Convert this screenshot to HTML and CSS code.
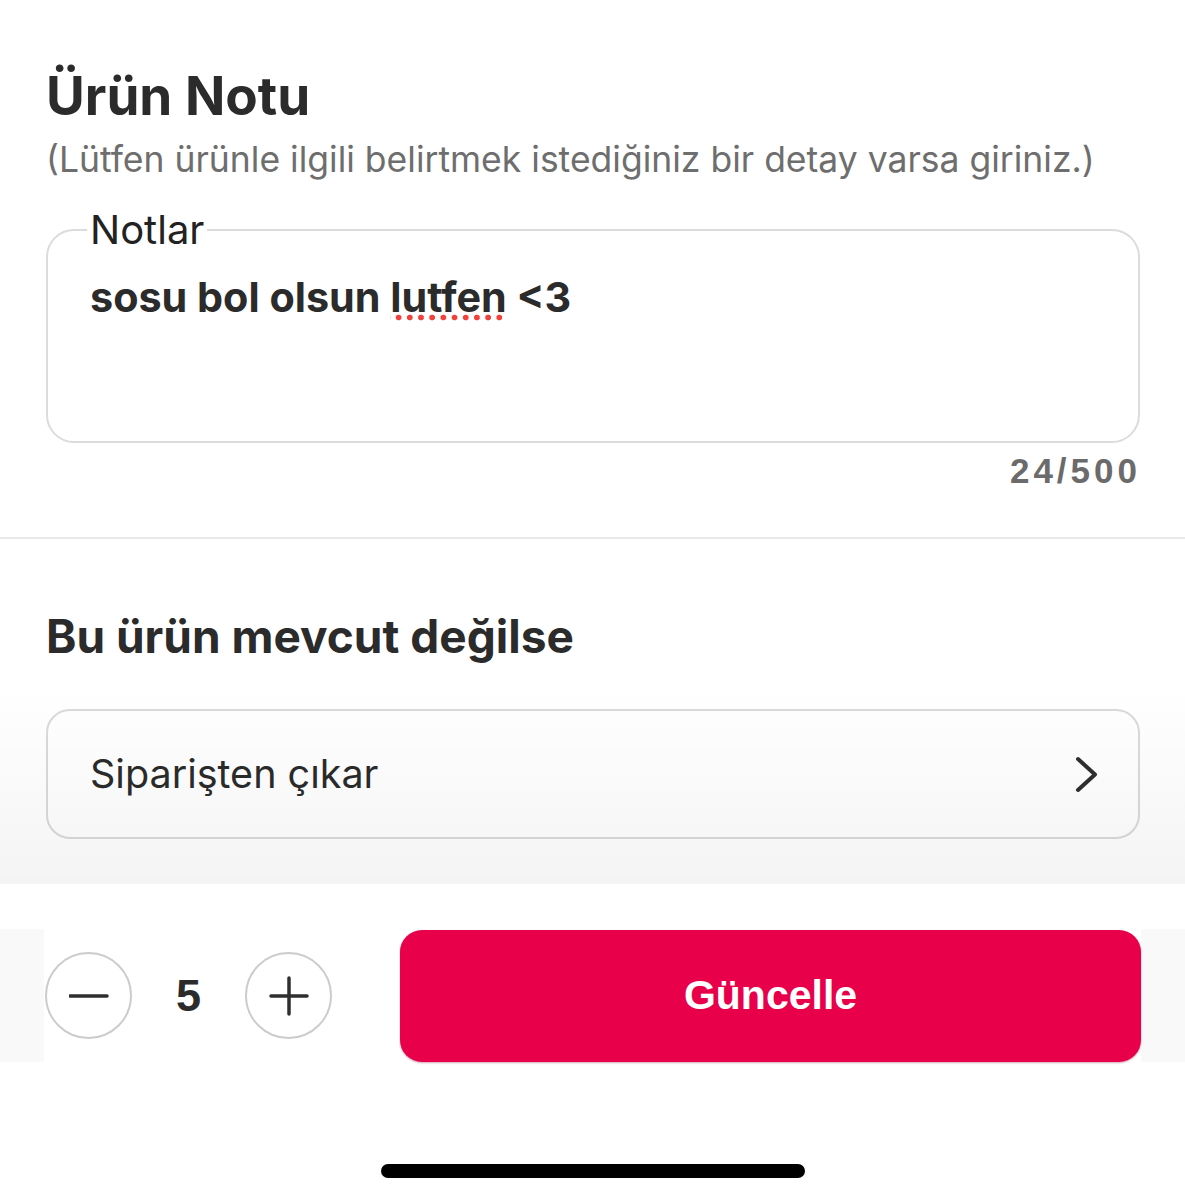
FILE: index.html
```html
<!DOCTYPE html>
<html lang="tr">
<head>
<meta charset="utf-8">
<title>Ürün Notu</title>
<link rel="stylesheet" href="styles.css">
</head>
<body>
<main class="sheet">
  <section class="note-section">
    <h1 class="title">Ürün Notu</h1>
    <p class="hint">(Lütfen ürünle ilgili belirtmek istediğiniz bir detay varsa giriniz.)</p>
    <fieldset class="notes">
      <legend class="notes-label">Notlar</legend>
      <div class="note-text">sosu bol olsun <span class="misspelled">lutfen</span> &lt;3</div>
    </fieldset>
    <div class="counter">24/500</div>
  </section>
  <hr class="divider">
  <section class="fallback">
    <h2 class="subtitle">Bu ürün mevcut değilse</h2>
    <button class="select" type="button">
      <span class="select-text">Siparişten çıkar</span>
      <svg class="chevron" width="24" height="40" viewBox="0 0 24 40" aria-hidden="true">
        <polyline points="4,5 21,20.5 4,36" fill="none" stroke="#2f2f2f" stroke-width="4" stroke-linecap="round" stroke-linejoin="round"/>
      </svg>
    </button>
  </section>
</main>
<footer class="action-bar">
  <div class="action-row">
    <div class="action-inner">
      <div class="stepper">
        <button class="step-btn" type="button" aria-label="Azalt">
          <svg width="40" height="40" viewBox="0 0 40 40" aria-hidden="true">
            <line x1="1" y1="20" x2="38" y2="20" stroke="#2f2f2f" stroke-width="3.5" stroke-linecap="round"/>
          </svg>
        </button>
        <span class="qty">5</span>
        <button class="step-btn" type="button" aria-label="Arttır">
          <svg width="40" height="40" viewBox="0 0 40 40" aria-hidden="true">
            <line x1="2" y1="20" x2="38" y2="20" stroke="#2f2f2f" stroke-width="3.5" stroke-linecap="round"/>
            <line x1="20" y1="2" x2="20" y2="38" stroke="#2f2f2f" stroke-width="3.5" stroke-linecap="round"/>
          </svg>
        </button>
      </div>
      <button class="update" type="button">Güncelle</button>
    </div>
  </div>
  <div class="home-indicator"></div>
</footer>
</body>
</html>
```

FILE: styles.css
```css
html, body {
  margin: 0;
  padding: 0;
  background: #ffffff;
}

body {
  font-family: Inter, Roboto, "Noto Sans", "Liberation Sans", sans-serif;
  color: #2b2b2b;
  width: 1185px;
  height: 1200px;
  overflow: hidden;
}

.sheet {
  display: flex;
  flex-direction: column;
}

.note-section {
  padding: 64px 45px 0 46px;
}

.title {
  margin: 0;
  font-size: 53px;
  line-height: 64px;
  font-weight: 700;
  color: #2b2b2b;
}

.hint {
  margin: 11px 0 0;
  font-size: 35.5px;
  line-height: 42px;
  color: #6e6e6e;
}

.notes {
  margin: 27px 0 0;
  padding: 21px 40px 0;
  border: 2px solid #dcdcdc;
  border-radius: 28px;
  min-width: 0;
}

.notes-label {
  margin-left: -1px;
  padding: 0 3px;
  font-size: 40px;
  line-height: 44px;
  color: #222222;
}

.note-text {
  padding-left: 2px;
  min-height: 168px;
  font-size: 41.3px;
  line-height: 48px;
  font-weight: 700;
  color: #2b2b2b;
}

.misspelled {
  background-image: radial-gradient(circle, #f2403a 2.6px, rgba(242, 64, 58, 0) 3.2px);
  background-repeat: repeat-x;
  background-size: 11.2px 7px;
  background-position: 3px calc(100% - 1px);
}

.counter {
  margin: 6px -1px 0 0;
  text-align: right;
  font-family: "Liberation Sans", Arial, sans-serif;
  font-size: 35px;
  line-height: 44px;
  font-weight: 700;
  letter-spacing: 4px;
  color: #6b6b6b;
}

.divider {
  margin: 44px 0 0;
  border: 0;
  height: 2px;
  background: #e9e9e9;
}

.fallback {
  padding: 71px 45px 0 46px;
}

.subtitle {
  margin: 0;
  font-size: 46px;
  line-height: 52px;
  font-weight: 700;
  color: #2b2b2b;
}

.select {
  margin-top: 47px;
  width: 100%;
  height: 130px;
  box-sizing: border-box;
  display: flex;
  align-items: center;
  justify-content: space-between;
  padding: 0 40px 0 42px;
  border: 2px solid #dadada;
  border-radius: 24px;
  background: #ffffff;
  font-family: inherit;
  cursor: pointer;
}

.select-text {
  font-size: 39.5px;
  color: #2b2b2b;
}

.chevron {
  display: block;
}

.action-bar {
  position: relative;
  margin-top: 45px;
  padding-top: 45px;
  background: #ffffff;
}

.action-bar::before {
  content: "";
  position: absolute;
  left: 0;
  right: 0;
  bottom: 100%;
  height: 200px;
  background: linear-gradient(to bottom, rgba(0, 0, 0, 0), rgba(0, 0, 0, 0.045));
  pointer-events: none;
}

.action-row {
  background: #f9f9f9;
  height: 133px;
}

.action-inner {
  margin: 0 44px;
  height: 100%;
  background: #ffffff;
  display: flex;
  align-items: center;
}

.stepper {
  display: flex;
  align-items: center;
  padding-left: 1px;
}

.step-btn {
  width: 87px;
  height: 87px;
  box-sizing: border-box;
  border: 2px solid #cccccc;
  border-radius: 50%;
  background: #ffffff;
  padding: 0;
  display: flex;
  align-items: center;
  justify-content: center;
  cursor: pointer;
}

.qty {
  width: 113px;
  text-align: center;
  font-family: "Liberation Sans", Arial, sans-serif;
  font-size: 45px;
  font-weight: 700;
  color: #2b2b2b;
}

.update {
  margin-left: 68px;
  flex: 1;
  height: 132px;
  border: 0;
  border-radius: 22px;
  background: #e8004b;
  color: #ffffff;
  font-family: "Liberation Sans", Arial, sans-serif;
  font-size: 41px;
  font-weight: 700;
  box-shadow: 0 1px 2px rgba(120, 0, 40, 0.35);
  cursor: pointer;
}

.home-indicator {
  margin: 102px auto 0;
  width: 424px;
  height: 14px;
  border-radius: 7px;
  background: #000000;
}
```
